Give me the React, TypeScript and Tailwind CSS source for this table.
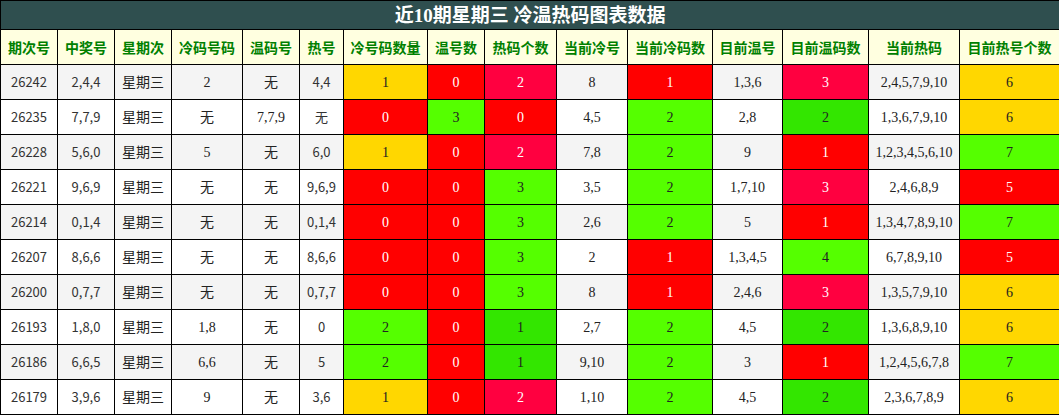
import React from 'react';

type Tone = 'G' | 'R' | 'C' | 'L' | 'D';

// 冷号码数量, 温号数, 热码个数, 当前冷号, 当前冷码数, 目前温号, 目前温码数, 当前热码, 目前热号个数
type Row = {
  issue: string;
  draw: string;
  week: string;
  cold: string;
  warm: string;
  hot: string;
  coldCount: [string, Tone];
  warmCount: [string, Tone];
  hotCount: [string, Tone];
  curCold: string;
  curColdCount: [string, Tone];
  curWarm: string;
  curWarmCount: [string, Tone];
  curHot: string;
  curHotCount: [string, Tone];
};

const headers = [
  '期次号',
  '中奖号',
  '星期次',
  '冷码号码',
  '温码号',
  '热号',
  '冷号码数量',
  '温号数',
  '热码个数',
  '当前冷号',
  '当前冷码数',
  '目前温号',
  '目前温码数',
  '当前热码',
  '目前热号个数',
];

const widths = [57, 57, 57, 71, 57, 44, 84, 57, 72, 71, 85, 70, 86, 91, 100];

const rows: Row[] = [
  { issue: '26242', draw: '2,4,4', week: '星期三', cold: '2', warm: '无', hot: '4,4', coldCount: ['1', 'G'], warmCount: ['0', 'R'], hotCount: ['2', 'C'], curCold: '8', curColdCount: ['1', 'R'], curWarm: '1,3,6', curWarmCount: ['3', 'C'], curHot: '2,4,5,7,9,10', curHotCount: ['6', 'G'] },
  { issue: '26235', draw: '7,7,9', week: '星期三', cold: '无', warm: '7,7,9', hot: '无', coldCount: ['0', 'R'], warmCount: ['3', 'L'], hotCount: ['0', 'R'], curCold: '4,5', curColdCount: ['2', 'L'], curWarm: '2,8', curWarmCount: ['2', 'D'], curHot: '1,3,6,7,9,10', curHotCount: ['6', 'G'] },
  { issue: '26228', draw: '5,6,0', week: '星期三', cold: '5', warm: '无', hot: '6,0', coldCount: ['1', 'G'], warmCount: ['0', 'R'], hotCount: ['2', 'C'], curCold: '7,8', curColdCount: ['2', 'L'], curWarm: '9', curWarmCount: ['1', 'R'], curHot: '1,2,3,4,5,6,10', curHotCount: ['7', 'L'] },
  { issue: '26221', draw: '9,6,9', week: '星期三', cold: '无', warm: '无', hot: '9,6,9', coldCount: ['0', 'R'], warmCount: ['0', 'R'], hotCount: ['3', 'L'], curCold: '3,5', curColdCount: ['2', 'L'], curWarm: '1,7,10', curWarmCount: ['3', 'C'], curHot: '2,4,6,8,9', curHotCount: ['5', 'R'] },
  { issue: '26214', draw: '0,1,4', week: '星期三', cold: '无', warm: '无', hot: '0,1,4', coldCount: ['0', 'R'], warmCount: ['0', 'R'], hotCount: ['3', 'L'], curCold: '2,6', curColdCount: ['2', 'L'], curWarm: '5', curWarmCount: ['1', 'R'], curHot: '1,3,4,7,8,9,10', curHotCount: ['7', 'L'] },
  { issue: '26207', draw: '8,6,6', week: '星期三', cold: '无', warm: '无', hot: '8,6,6', coldCount: ['0', 'R'], warmCount: ['0', 'R'], hotCount: ['3', 'L'], curCold: '2', curColdCount: ['1', 'R'], curWarm: '1,3,4,5', curWarmCount: ['4', 'L'], curHot: '6,7,8,9,10', curHotCount: ['5', 'R'] },
  { issue: '26200', draw: '0,7,7', week: '星期三', cold: '无', warm: '无', hot: '0,7,7', coldCount: ['0', 'R'], warmCount: ['0', 'R'], hotCount: ['3', 'L'], curCold: '8', curColdCount: ['1', 'R'], curWarm: '2,4,6', curWarmCount: ['3', 'C'], curHot: '1,3,5,7,9,10', curHotCount: ['6', 'G'] },
  { issue: '26193', draw: '1,8,0', week: '星期三', cold: '1,8', warm: '无', hot: '0', coldCount: ['2', 'L'], warmCount: ['0', 'R'], hotCount: ['1', 'D'], curCold: '2,7', curColdCount: ['2', 'L'], curWarm: '4,5', curWarmCount: ['2', 'D'], curHot: '1,3,6,8,9,10', curHotCount: ['6', 'G'] },
  { issue: '26186', draw: '6,6,5', week: '星期三', cold: '6,6', warm: '无', hot: '5', coldCount: ['2', 'L'], warmCount: ['0', 'R'], hotCount: ['1', 'D'], curCold: '9,10', curColdCount: ['2', 'L'], curWarm: '3', curWarmCount: ['1', 'R'], curHot: '1,2,4,5,6,7,8', curHotCount: ['7', 'L'] },
  { issue: '26179', draw: '3,9,6', week: '星期三', cold: '9', warm: '无', hot: '3,6', coldCount: ['1', 'G'], warmCount: ['0', 'R'], hotCount: ['2', 'C'], curCold: '1,10', curColdCount: ['2', 'L'], curWarm: '4,5', curWarmCount: ['2', 'D'], curHot: '2,3,6,7,8,9', curHotCount: ['6', 'G'] },
];

const toneClass: Record<Tone, string> = {
  G: 'bg-[#ffd700] text-[#222]',
  R: 'bg-[#ff0000] text-white',
  C: 'bg-[#ff0040] text-white',
  L: 'bg-[#55ff00] text-[#222]',
  D: 'bg-[#33e600] text-[#222]',
};

const sans = "font-['Noto_Sans_CJK_SC',sans-serif] text-[13px] text-[#333]";
const serif = "font-['Liberation_Serif','Noto_Sans_CJK_SC',serif] text-[14px] text-[#222]";

const Cell = ({ children, className = '' }: { children: React.ReactNode; className?: string }) => (
  <td className={`border border-black text-center align-middle p-0 ${className}`}>{children}</td>
);

const ToneCell = ({ v }: { v: [string, Tone] }) => (
  <Cell className={`font-['Liberation_Serif',serif] text-[14px] ${toneClass[v[1]]}`}>{v[0]}</Cell>
);

export default function App() {
  return (
    <div className="w-[1059px] h-[415px] bg-white overflow-hidden">
      <table className="w-[1059px] table-fixed border-collapse border border-black">
        <colgroup>
          {widths.map((w, i) => (
            <col key={i} style={{ width: w }} />
          ))}
        </colgroup>
        <thead>
          <tr className="h-[29px]">
            <th
              colSpan={15}
              className="border border-black bg-[#2f4f4f] text-white text-[19px] font-bold font-['Liberation_Serif','Noto_Sans_CJK_SC',serif] p-0 leading-none"
            >
              近10期星期三 冷温热码图表数据
            </th>
          </tr>
          <tr className="h-[35px]">
            {headers.map((h) => (
              <th
                key={h}
                className="border border-black bg-[#ffffe0] text-[#008000] text-[14px] font-bold font-['Noto_Sans_CJK_SC',sans-serif] p-0 whitespace-nowrap"
              >
                {h}
              </th>
            ))}
          </tr>
        </thead>
        <tbody>
          {rows.map((r, i) => (
            <tr key={r.issue} className={`h-[35px] ${i % 2 === 0 ? 'bg-[#f4f4f4]' : 'bg-white'}`}>
              <Cell className={sans}>{r.issue}</Cell>
              <Cell className={sans}>{r.draw}</Cell>
              <Cell className={serif}>{r.week}</Cell>
              <Cell className={serif}>{r.cold}</Cell>
              <Cell className={serif}>{r.warm}</Cell>
              <Cell className={sans}>{r.hot}</Cell>
              <ToneCell v={r.coldCount} />
              <ToneCell v={r.warmCount} />
              <ToneCell v={r.hotCount} />
              <Cell className={serif}>{r.curCold}</Cell>
              <ToneCell v={r.curColdCount} />
              <Cell className={serif}>{r.curWarm}</Cell>
              <ToneCell v={r.curWarmCount} />
              <Cell className={serif}>{r.curHot}</Cell>
              <ToneCell v={r.curHotCount} />
            </tr>
          ))}
        </tbody>
      </table>
    </div>
  );
}
